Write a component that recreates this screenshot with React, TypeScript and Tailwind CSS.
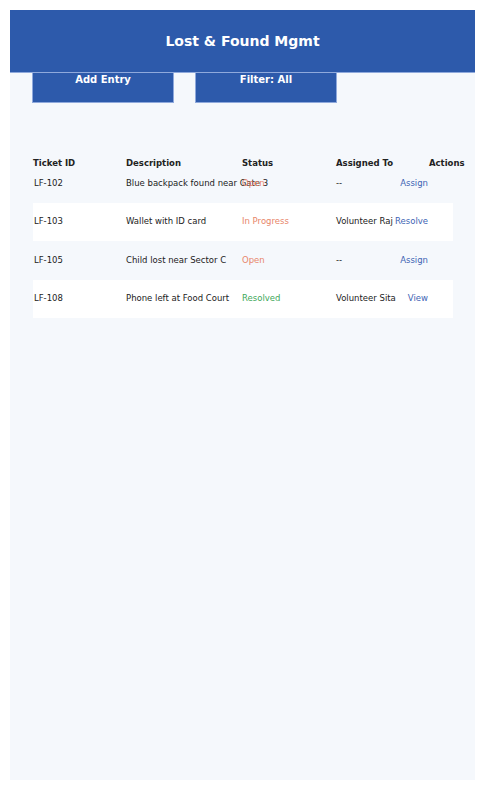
import React from "react";

type Ticket = {
  id: string;
  description: string;
  status: "Open" | "In Progress" | "Resolved";
  assignee: string;
  action: string;
};

const tickets: Ticket[] = [
  { id: "LF-102", description: "Blue backpack found near Gate 3", status: "Open", assignee: "--", action: "Assign" },
  { id: "LF-103", description: "Wallet with ID card", status: "In Progress", assignee: "Volunteer Raj", action: "Resolve" },
  { id: "LF-105", description: "Child lost near Sector C", status: "Open", assignee: "--", action: "Assign" },
  { id: "LF-108", description: "Phone left at Food Court", status: "Resolved", assignee: "Volunteer Sita", action: "View" },
];

const statusColor: Record<Ticket["status"], string> = {
  Open: "text-[#e8866a]",
  "In Progress": "text-[#e8866a]",
  Resolved: "text-[#3ea85a]",
};

const App: React.FC = () => {
  return (
    <div className="min-h-screen bg-white p-[10px] font-['DejaVu_Sans',sans-serif] text-[#222]">
      <div className="h-[770px] w-[465px] bg-[#f5f8fc]">
        <header className="relative z-10 flex h-[63px] items-center justify-center border-b border-[#8fa9dc] bg-[#2d5aab]">
          <h1 className="text-[14px] font-bold text-white">Lost &amp; Found Mgmt</h1>
        </header>

        <div className="-mt-[19px] flex gap-[21px] pl-[22px]">
          <button className="flex h-[49px] w-[142px] items-center justify-center pt-[2px] border-x border-b border-[#8fa9dc] bg-[#2d5aab] text-[10px] font-bold text-white">
            Add Entry
          </button>
          <button className="flex h-[49px] w-[142px] items-center justify-center pt-[2px] border-x border-b border-[#8fa9dc] bg-[#2d5aab] text-[10px] font-bold text-white">
            Filter: All
          </button>
        </div>

        <div className="mt-[50px] px-[23px] text-[8.5px]">
          <div className="flex h-[20px] items-center whitespace-nowrap pt-px font-bold">
            <div className="w-[93px] shrink-0">Ticket ID</div>
            <div className="w-[116px] shrink-0">Description</div>
            <div className="w-[94px] shrink-0">Status</div>
            <div className="w-[93px] shrink-0">Assigned To</div>
            <div className="shrink-0">Actions</div>
          </div>
          <div className="-mt-[9px] w-[420px]">
            {tickets.map((t, i) => (
              <div
                key={t.id}
                className={`flex h-[38.5px] items-center whitespace-nowrap ${i % 2 === 1 ? "bg-white" : ""}`}
              >
                <div className="w-[93px] shrink-0 pl-px">{t.id}</div>
                <div className="w-[116px] shrink-0 overflow-visible">{t.description}</div>
                <div className={`w-[94px] shrink-0 ${statusColor[t.status]}`}>{t.status}</div>
                <div className="w-[60px] shrink-0">{t.assignee}</div>
                <div className="w-[33px] shrink-0 text-right text-[#4064b4]">
                  <span className="inline-block translate-x-[-1px]">{t.action}</span>
                </div>
              </div>
            ))}
          </div>
        </div>
      </div>
    </div>
  );
};

export default App;
